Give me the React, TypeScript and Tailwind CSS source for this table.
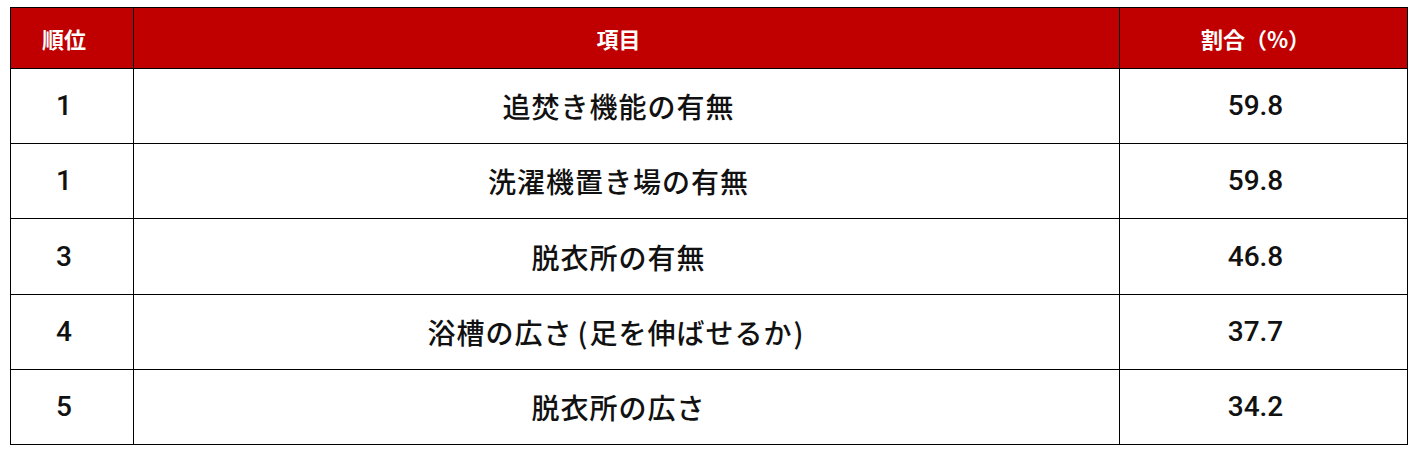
import React from 'react';

const rows = [
  { rank: '1', item: <>追焚き機能の有無</>, rate: '59.8', h: 'h-[75px]' },
  { rank: '1', item: <>洗濯機置き場の有無</>, rate: '59.8', h: 'h-[75px]' },
  { rank: '3', item: <>脱衣所の有無</>, rate: '46.8', h: 'h-[76px]' },
  {
    rank: '4',
    item: (
      <>
        浴槽の広さ<span className="pl-[5px] pr-[1px]">(</span>足を伸ばせるか<span className="pl-[1px] pr-[5px]">)</span>
      </>
    ),
    rate: '37.7',
    h: 'h-[75px]',
  },
  { rank: '5', item: <>脱衣所の広さ</>, rate: '34.2', h: 'h-[75px]' },
];

const num = { fontFamily: 'Roboto, "Liberation Sans", sans-serif' };

export default function App() {
  return (
    <div
      className="w-[1420px] h-[456px] bg-white pt-[7px] pl-[10px]"
      style={{ fontFamily: '"Noto Sans CJK JP", "Noto Sans", sans-serif' }}
    >
      <div className="w-[1398px] border-t border-l border-black">
        {/* header */}
        <div className="flex h-[61px] bg-[#c00000] text-white text-[22px] font-bold">
          <div className="w-[123px] border-r border-b border-black flex items-center justify-center pr-4">順位</div>
          <div className="w-[986px] border-r border-b border-black flex items-center justify-center pr-4">項目</div>
          <div className="w-[288px] border-r border-b border-black flex items-center justify-center pr-4">割合（%）</div>
        </div>
        {rows.map((r, i) => (
          <div key={i} className={`flex ${r.h} text-[#111] text-[28px]`}>
            <div className="w-[123px] border-r border-b border-black flex items-center justify-center pr-4 font-medium" style={num}>{r.rank}</div>
            <div className="w-[986px] border-r border-b border-black flex items-center justify-center pr-4 tracking-[1px] font-medium">{r.item}</div>
            <div className="w-[288px] border-r border-b border-black flex items-center justify-center pr-4 font-medium" style={num}>{r.rate}</div>
          </div>
        ))}
      </div>
    </div>
  );
}
